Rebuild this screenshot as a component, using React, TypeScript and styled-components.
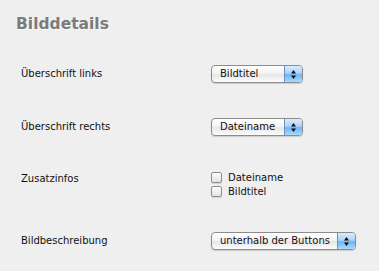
import React from 'react';
import styled, { createGlobalStyle } from 'styled-components';

const GlobalStyle = createGlobalStyle`
  html, body {
    margin: 0;
    padding: 0;
    background: #efefef;
  }
  body {
    font-family: 'DejaVu Sans', Verdana, sans-serif;
    font-size: 10px;
    color: #111;
  }
`;

const Page = styled.div`
  padding: 14px 0 0 16px;
  width: 379px;
  height: 271px;
  box-sizing: border-box;
`;

const Title = styled.h2`
  margin: 0;
  font-size: 15.5px;
  line-height: 20px;
  font-weight: bold;
  color: #7b7b7b;
  text-shadow: 1px 1px 0 rgba(255, 255, 255, 0.6);
`;

const Form = styled.div`
  display: grid;
  grid-template-columns: 190px auto;
  row-gap: 35px;
  margin-top: 31px;
  padding-left: 5px;
`;

const Label = styled.div<{ $top?: boolean }>`
  align-self: ${({ $top }) => ($top ? 'start' : 'center')};
  padding-top: ${({ $top }) => ($top ? '1px' : '0')};
  line-height: 14px;
`;

const Field = styled.div`
  display: flex;
  flex-direction: column;
  align-items: flex-start;
`;

const SelectBox = styled.div<{ $width: number }>`
  display: flex;
  width: ${({ $width }) => $width}px;
  height: 18px;
  box-sizing: border-box;
  border: 1px solid #8c8c8c;
  border-radius: 4px;
  overflow: hidden;
  background: linear-gradient(#ffffff 0%, #f4f4f4 45%, #e6e6e6 55%, #fdfdfd 100%);
  box-shadow: 0 1px 1px rgba(0, 0, 0, 0.15);
`;

const SelectText = styled.span`
  flex: 1;
  padding-left: 8px;
  line-height: 16px;
  color: #111;
  white-space: nowrap;
`;

const ArrowBox = styled.span`
  width: 17px;
  display: flex;
  align-items: center;
  justify-content: center;
  border-left: 1px solid #6d8fc4;
  background: linear-gradient(#d9ecfd 0%, #a9d2fa 45%, #6fb3f4 55%, #a8dcff 100%);
`;

const CheckList = styled.div`
  display: flex;
  flex-direction: column;
  gap: 3px;
  padding-top: 1px;
`;

const CheckRow = styled.label`
  display: flex;
  align-items: center;
  gap: 6px;
  line-height: 11px;
`;

const Box = styled.span`
  width: 11px;
  height: 11px;
  box-sizing: border-box;
  border: 1px solid #8e8e8e;
  border-radius: 2px;
  background: linear-gradient(#fdfdfd, #e3e3e3);
  box-shadow: 0 1px 1px rgba(0, 0, 0, 0.12);
`;

function Arrows() {
  return (
    <svg width="7" height="11" viewBox="0 0 7 11">
      <path d="M3.5 1 L6 4.5 H1 Z" fill="#111" />
      <path d="M3.5 10 L6 6.5 H1 Z" fill="#111" />
    </svg>
  );
}

function Select({ value, width }: { value: string; width: number }) {
  return (
    <SelectBox $width={width}>
      <SelectText>{value}</SelectText>
      <ArrowBox>
        <Arrows />
      </ArrowBox>
    </SelectBox>
  );
}

export default function App() {
  return (
    <Page>
      <GlobalStyle />
      <Title>Bilddetails</Title>
      <Form>
        <Label>Überschrift links</Label>
        <Field>
          <Select value="Bildtitel" width={92} />
        </Field>

        <Label>Überschrift rechts</Label>
        <Field>
          <Select value="Dateiname" width={92} />
        </Field>

        <Label $top>Zusatzinfos</Label>
        <Field>
          <CheckList>
            <CheckRow>
              <Box />
              Dateiname
            </CheckRow>
            <CheckRow>
              <Box />
              Bildtitel
            </CheckRow>
          </CheckList>
        </Field>

        <Label>Bildbeschreibung</Label>
        <Field>
          <Select value="unterhalb der Buttons" width={145} />
        </Field>
      </Form>
    </Page>
  );
}
